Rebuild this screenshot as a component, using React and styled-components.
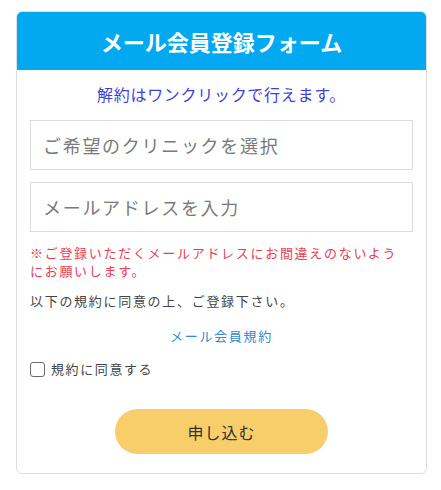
import React from "react";
import styled, { createGlobalStyle } from "styled-components";

const Global = createGlobalStyle`
  html, body { margin: 0; padding: 0; background: #fff; }
  body { font-family: "Noto Sans CJK JP", "Noto Sans", sans-serif; }
  * { box-sizing: border-box; }
`;

const Page = styled.div`
  padding: 11px 14px 0 16px;
`;

const Card = styled.div`
  border: 1px solid #dedede;
  border-radius: 6px;
  overflow: hidden;
  background: #fff;
`;

const Header = styled.div`
  height: 58px;
  background: #02a9f1;
  color: #fff;
  display: flex;
  align-items: center;
  justify-content: center;
  font-size: 22px;
  font-weight: 700;
`;

const Body = styled.div`
  padding: 12px 13px 19px;
  display: flex;
  flex-direction: column;
`;

const Lead = styled.p`
  margin: 0;
  text-align: center;
  font-size: 16px;
  letter-spacing: 0.7px;
  line-height: 24px;
  color: #3f3fdc;
`;

const Field = styled.div`
  height: 50px;
  border: 1px solid #dcdcdc;
  display: flex;
  align-items: center;
  padding: 0 12px;
  font-size: 18px;
  letter-spacing: 1.7px;
  color: #7a7a7a;
  margin-top: ${(p) => p.$mt}px;
`;

const Note = styled.p`
  margin: ${(p) => p.$mt}px 0 0;
  font-size: 13px;
  letter-spacing: 1.7px;
  line-height: 18px;
  color: ${(p) => p.$color};
  text-align: ${(p) => p.$align || "left"};
`;

const CheckRow = styled.label`
  margin-top: 15px;
  display: flex;
  align-items: center;
  gap: 6px;
  font-size: 13px;
  letter-spacing: 1.6px;
  color: #444;
  line-height: 18px;
`;

const Box = styled.span`
  width: 15px;
  height: 15px;
  border: 1.5px solid #6a6a6a;
  border-radius: 3px;
  background: #fff;
`;

const Button = styled.button`
  margin: 31px auto 0;
  width: 213px;
  height: 45px;
  border: none;
  border-radius: 23px;
  background: #f8ce6a;
  color: #333;
  font-family: inherit;
  font-size: 16px;
  letter-spacing: 1px;
`;

export default function App() {
  return (
    <Page>
      <Global />
      <Card>
        <Header>メール会員登録フォーム</Header>
        <Body>
          <Lead>解約はワンクリックで行えます。</Lead>
          <Field $mt={14}>ご希望のクリニックを選択</Field>
          <Field $mt={12}>メールアドレスを入力</Field>
          <Note $mt={12} $color="#ea3d55">
            ※ご登録いただくメールアドレスにお間違えのないよう
            <br />
            にお願いします。
          </Note>
          <Note $mt={12} $color="#444">以下の規約に同意の上、ご登録下さい。</Note>
          <Note $mt={17} $color="#2f8bd0" $align="center">メール会員規約</Note>
          <CheckRow>
            <Box />
            規約に同意する
          </CheckRow>
          <Button>申し込む</Button>
        </Body>
      </Card>
    </Page>
  );
}
